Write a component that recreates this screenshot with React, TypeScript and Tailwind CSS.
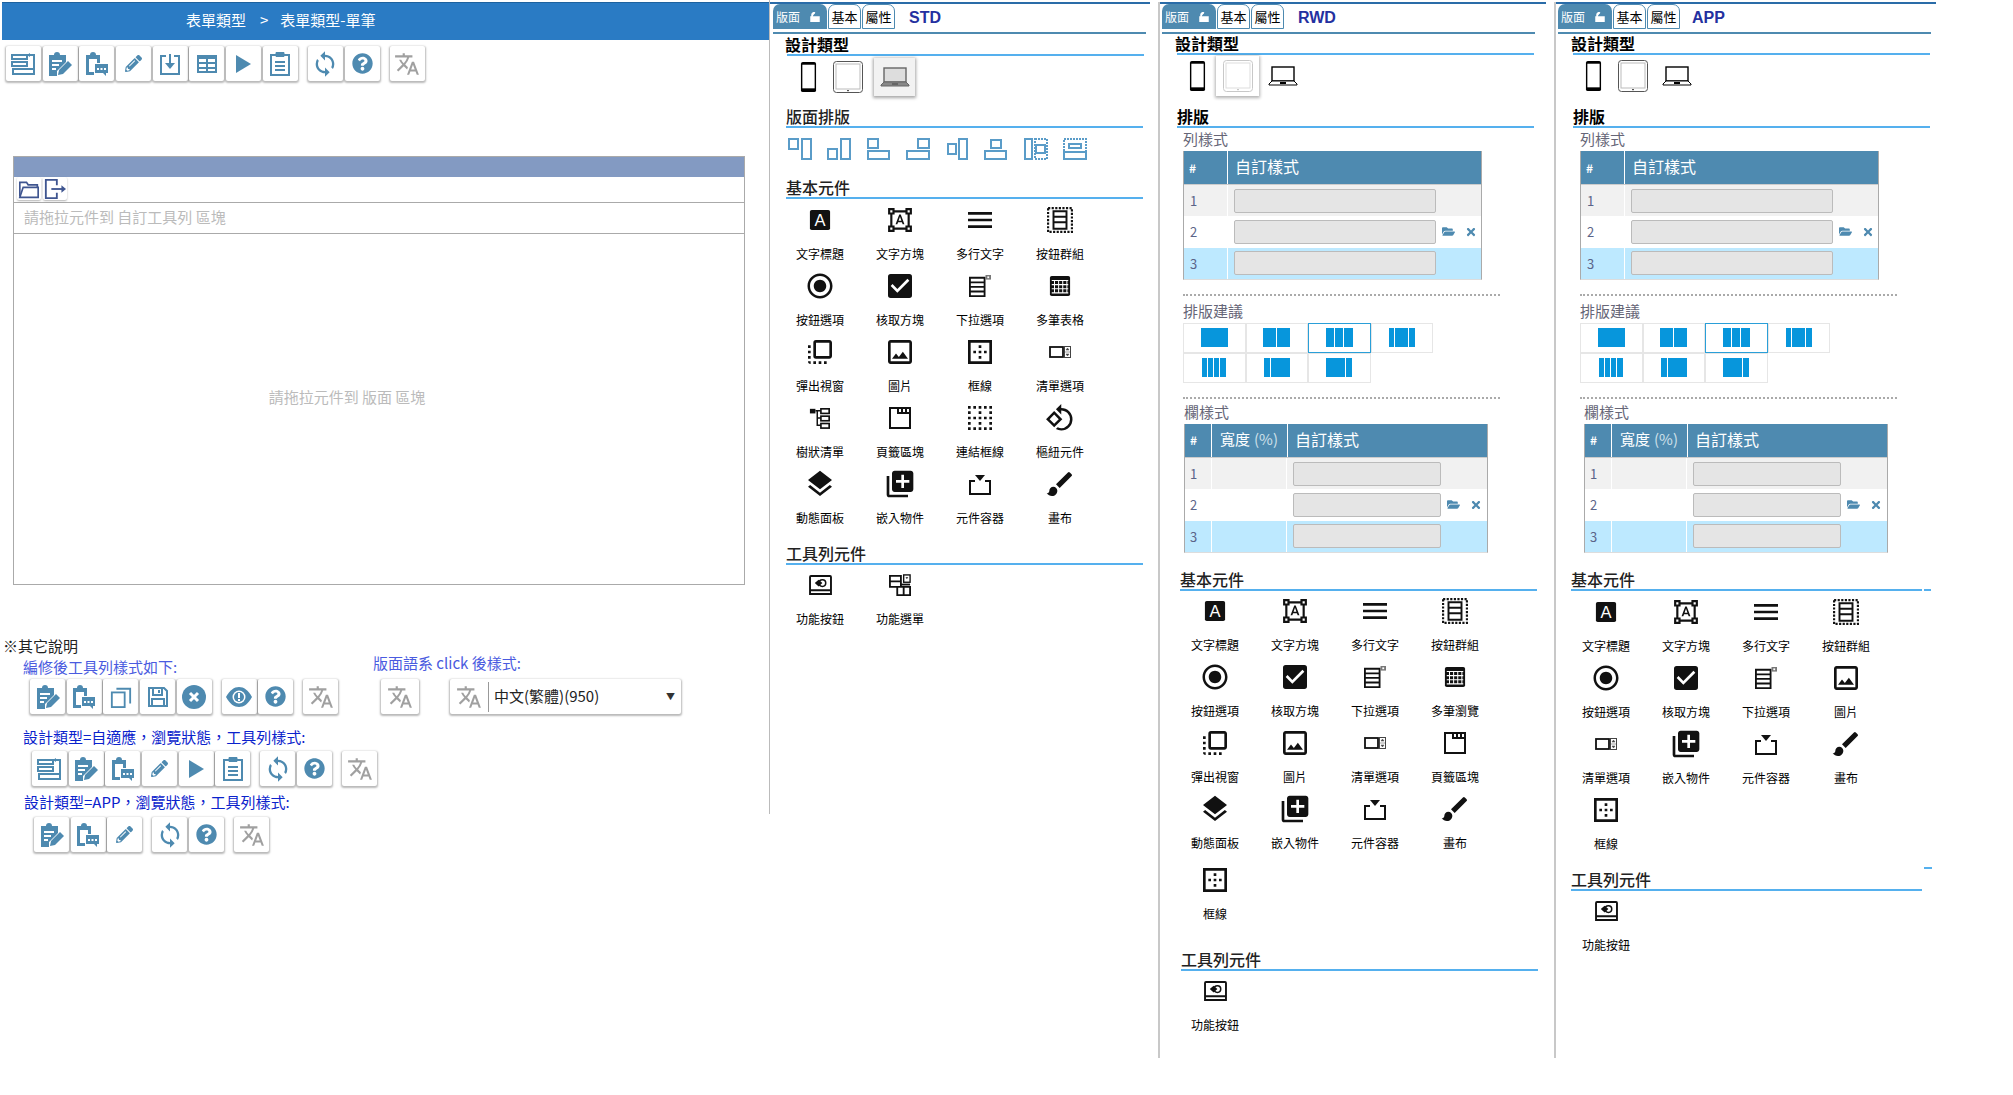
import React from 'react';
import { FaFolderOpen, FaPencilAlt, FaQuestionCircle, FaTimes } from 'react-icons/fa';
import {
  MdBorderClear, MdBorderOuter, MdBrush, MdCheckBox, MdFlipToFront, MdFormatShapes, MdLayers, MdLibraryAdd,
  MdMenu, MdOutlineImage, MdRadioButtonChecked, MdRotate90DegreesCcw, MdSync, MdTranslate,
} from 'react-icons/md';

const BLUE = '#4e8ab0';

const Svg = ({ w = 24, h = 24, box = '0 0 24 24', children, color = BLUE }: { w?: number; h?: number; box?: string; children: React.ReactNode; color?: string }) => (
  <svg width={w} height={h} viewBox={box} fill="none" stroke="none" style={{ color }}>{children}</svg>
);

// toolbar drawings
const Stack = () => (
  <Svg w={25} h={22} box="0 0 25 22">
    <g stroke="currentColor" strokeWidth="2">
      <rect x="1" y="2" width="15" height="4" />
      <rect x="1" y="9" width="15" height="4" />
      <rect x="2" y="16" width="21" height="5" />
      <path d="M16 2h7v19" />
    </g>
    <path d="M16 2l3-2v4z" fill="currentColor" />
  </Svg>
);
const ClipEdit = () => (
  <Svg>
    <path d="M1 3h5a3 3 0 016 0h6v7l-9 9v5H1zM4 8v2h10V8zm0 4v2h7v-2zm0 4v2h4v-2z" fill="currentColor" fillRule="evenodd" />
    <path d="M10 23l1-5 9-9 4 4-9 9z" fill="currentColor" />
  </Svg>
);
const ClipChat = () => (
  <Svg>
    <path d="M1 3h4a3 3 0 016 0h4v8h-3V7H4v13h5v3H1z" fill="currentColor" />
    <path d="M10 12h13v9h-2v3l-3-3h-8z" fill="currentColor" />
    <g fill="#fff"><rect x="12" y="16" width="2" height="2" /><rect x="15.500" y="16" width="2" height="2" /><rect x="19" y="16" width="2" height="2" /></g>
  </Svg>
);
const Download = () => (
  <Svg w={20} h={22} box="0 0 20 22">
    <path d="M6 3H1v18h18V3h-5" stroke="currentColor" strokeWidth="2" />
    <path d="M10 1v10" stroke="currentColor" strokeWidth="2" />
    <path d="M5 10h10l-5 6z" fill="currentColor" />
  </Svg>
);
const TableIcon = () => (
  <Svg w={20} h={18} box="0 0 20 18">
    <path d="M0 0h20v18H0zM2 4v3h7V4zm9 0v3h7V4zM2 9v3h7V9zm9 0v3h7V9zM2 14v2h7v-2zm9 0v2h7v-2z" fill="currentColor" fillRule="evenodd" />
  </Svg>
);
const Play = () => (
  <Svg w={15} h={18} box="0 0 15 18"><path d="M0 0l15 9L0 18z" fill="currentColor" /></Svg>
);
const Clip = () => (
  <Svg w={20} h={25} box="0 0 20 25">
    <path d="M1 4h18v20H1z" stroke="currentColor" strokeWidth="2" />
    <path d="M6 1.500h8v4H6z" fill="currentColor" stroke="currentColor" />
    <path d="M5 10h10v2H5zm0 4h10v2H5zm0 4h10v2H5z" fill="currentColor" />
  </Svg>
);
const Translate = () => <MdTranslate size={26} color="#a0a0a0" />;
const Copy = () => (
  <Svg w={22} h={26}>
    <rect x="2" y="7" width="14" height="16" stroke="currentColor" strokeWidth="2" />
    <path d="M7 3h15v16" stroke="currentColor" strokeWidth="2" />
  </Svg>
);
const Floppy = () => (
  <Svg w={24} h={24}>
    <path d="M3 3h15l3 3v15H3zM7 3v7h9V3M6 21v-7h12v7" stroke="currentColor" strokeWidth="2" />
    <rect x="12" y="5" width="2" height="3" fill="currentColor" />
  </Svg>
);
const CloseCircle = () => (
  <Svg w={24} h={24}>
    <circle cx="12" cy="12" r="12" fill="currentColor" />
    <path d="M8 8l8 8M16 8l-8 8" stroke="#fff" strokeWidth="3" />
  </Svg>
);
const EyeMark = () => (
  <Svg w={26} h={20} box="0 0 26 20">
    <path d="M0 10C4 3 8 0 13 0s9 3 13 10c-4 7-8 10-13 10S4 17 0 10z" fill="currentColor" />
    <circle cx="13" cy="10" r="6.500" fill="#fff" />
    <circle cx="13" cy="10" r="5" fill="currentColor" />
    <path d="M12 6h2v5h-2zm0 6h2v2h-2z" fill="#fff" />
  </Svg>
);
const Pencil = () => <FaPencilAlt size={17} color={BLUE} />;
const Sync = () => <MdSync size={28} color={BLUE} />;
const Help = () => <FaQuestionCircle size={21} color={BLUE} />;

const Btn = ({ children, w = 'w-[35px]' }: { children?: React.ReactNode; w?: string }) => (
  <div className={`${w} h-[35px] shrink-0 flex items-center justify-center bg-white rounded-[2px] shadow-[0_1px_2px_1px_rgba(0,0,0,0.28)]`}>{children}</div>
);

const ToolRow = ({ groups, className }: { groups: React.ReactNode[][]; className?: string }) => (
  <div className={`flex gap-[10px] ${className}`}>
    {groups.map((g, i) => (
      <div key={i} className="flex gap-[1.7px]">
        {g.map((icon, j) => <Btn key={j}>{icon}</Btn>)}
      </div>
    ))}
  </div>
);

// widget drawings
const K = '#111';
const TileA = () => (
  <Svg w={22} h={22} color={K}>
    <rect x="1" y="1" width="22" height="22" rx="2" fill="currentColor" />
    <text x="12" y="19" textAnchor="middle" fontSize="18" fill="#fff" fontFamily="'Liberation Sans', sans-serif">A</text>
  </Svg>
);
const Shapes = () => <MdFormatShapes size={26} color={K} />;
const BtnGroup = () => (
  <Svg w={26} h={26} color={K}>
    <rect x="1" y="1" width="22" height="22" stroke="currentColor" strokeWidth="2" strokeDasharray="2 1.300" />
    <path d="M6 4h12v5H6zm0 5h12v5H6zm0 5h12v6H6z" stroke="currentColor" strokeWidth="1.800" />
  </Svg>
);
const Dropdown = () => (
  <Svg w={22} h={22} color={K}>
    <path d="M1 3h16v20H1zM1 8h16M1 13h16M1 18h16" stroke="currentColor" strokeWidth="2" />
    <rect x="18" y="0" width="6" height="5" fill="#777" />
    <rect x="20" y="1.500" width="2" height="2" fill="#fff" />
  </Svg>
);
const GridTable = () => (
  <Svg w={24} h={22} color={K}>
    <rect x="1" y="1" width="22" height="22" rx="2" fill="currentColor" />
    <path d="M6 6v14M10.500 6v14M15 6v14M19.500 6v14M3 6h18M3 10.500h18M3 15h18M3 19.500h18" stroke="#fff" strokeWidth="1.100" />
  </Svg>
);
const ListSel = () => (
  <Svg w={22} h={12} box="0 0 22 12" color={K}>
    <rect x="1" y="1" width="13" height="10" stroke="currentColor" strokeWidth="1.800" />
    <rect x="15.500" y="0.500" width="6" height="11" stroke="#444" />
    <path d="M16 6h5M17 4l1.500-2 1.500 2zM17 8l1.500 2 1.500-2z" fill="#444" stroke="#444" strokeWidth="0.500" />
  </Svg>
);
const Tree = () => (
  <Svg w={22} h={24} color={K}>
    <rect x="1" y="2" width="6" height="5" fill="currentColor" />
    <path d="M7 4h6M9 4v16h4M9 12h4" stroke="currentColor" strokeWidth="1.600" />
    <rect x="13" y="2" width="9" height="5" stroke="currentColor" strokeWidth="1.800" fill="#fff" />
    <rect x="13" y="10" width="9" height="5" stroke="currentColor" strokeWidth="1.800" fill="#fff" />
    <rect x="13" y="18" width="9" height="5" stroke="currentColor" strokeWidth="1.800" fill="#fff" />
  </Svg>
);
const TabBox = () => (
  <Svg w={24} h={24} color={K}>
    <path d="M2 2h20v20H2zM10 2v5h12M14 3v3M18 3v3" stroke="currentColor" strokeWidth="2" />
  </Svg>
);
const Container = () => (
  <Svg w={26} h={24} color={K}>
    <path d="M7 9H2v13h20V9h-5" stroke="currentColor" strokeWidth="2" />
    <path d="M7 3h10l-5 6z" fill="currentColor" />
  </Svg>
);
const FuncBtn = () => (
  <Svg w={23} h={20} box="0 0 24 21" color={K}>
    <path d="M2 1h20a1 1 0 011 1v18H1V2a1 1 0 011-1zM1 16h22" stroke="currentColor" strokeWidth="2" />
    <path d="M6 8.500l4-3.500 4 3.500-4 3.500z" fill="currentColor" />
    <circle cx="14" cy="8.500" r="3.500" stroke="currentColor" strokeWidth="1.600" />
  </Svg>
);
const FuncMenu = () => (
  <Svg w={22} h={22} color={K}>
    <path d="M1 2h12v12H1zM1 8h12M9 14h14v9H9zM16 14v9" stroke="currentColor" strokeWidth="2" />
    <rect x="16" y="1" width="7" height="8" stroke="currentColor" strokeWidth="1.500" />
    <path d="M18 3.500h3l-1.500 2z" fill="currentColor" />
    <path d="M13 11.500h10" stroke="currentColor" strokeWidth="2" />
  </Svg>
);

const W: Record<string, React.ReactNode> = {
  title: <TileA />,
  input: <Shapes />,
  multi: <MdMenu size={32} color={K} />,
  group: <BtnGroup />,
  radio: <MdRadioButtonChecked size={30} color={K} />,
  check: <MdCheckBox size={32} color={K} />,
  drop: <Dropdown />,
  grid: <GridTable />,
  popup: <MdFlipToFront size={32} color={K} />,
  image: <MdOutlineImage size={32} color={K} />,
  border: <MdBorderOuter size={32} color={K} />,
  list: <ListSel />,
  tree: <Tree />,
  tab: <TabBox />,
  link: <MdBorderClear size={32} color={K} />,
  pivot: <MdRotate90DegreesCcw size={30} color={K} />,
  layer: <MdLayers size={32} color={K} />,
  embed: <MdLibraryAdd size={32} color={K} />,
  box: <Container />,
  brush: <MdBrush size={32} color={K} />,
  func: <FuncBtn />,
  menu: <FuncMenu />,
};

const WidgetGrid = ({ items, className }: { items: [string, string][]; className?: string }) => (
  <div className={`grid grid-cols-[repeat(4,80px)] auto-rows-[66px] ${className}`}>
    {items.map(([key, label]) => (
      <div key={label} className="flex flex-col items-center">
        <div className="h-[32px] flex items-center justify-center">{W[key]}</div>
        <div className="mt-[8px] h-[20px] text-[12px] leading-[20px] text-black whitespace-nowrap">{label}</div>
      </div>
    ))}
  </div>
);

const Section = ({ title, className, w = 'w-[357px]', tx = 'ml-0', strong, dash }: { title: string; className?: string; w?: string; tx?: string; strong?: boolean; dash?: boolean }) => (
  <div className={className}>
    <div className={`h-[19px] text-[16px] leading-[18px] whitespace-nowrap ${strong ? 'font-bold text-black' : 'font-medium text-[#222]'} ${tx}`}>{title}</div>
    <div className="flex gap-[2px]">
      <div className={`h-[2px] bg-[#55b0ee] ${w}`} />
      {dash && <div className="h-[2px] w-[7px] bg-[#55b0ee]" />}
    </div>
  </div>
);

const Tabs = ({ name, ml = 'ml-[3px]', nameMl = 'ml-[14px]' }: { name: string; ml?: string; nameMl?: string }) => (
  <div>
    <div className="h-[2px] bg-[#2a6ca8]" />
    <div className={`flex items-center h-[25px] ${ml}`}>
      <div className="w-[54px] h-[25px] flex items-center pl-[3px] gap-[10px] bg-[#4e8ab0] rounded-t-[7px] text-[12px] text-white">
        <span>版面</span>
        <svg width="10" height="10" viewBox="0 0 10 10"><path d="M1 5h8v5H1zM2 5V3a2 2 0 013-2" stroke="#fff" strokeWidth="1.500" fill="#fff" /></svg>
      </div>
      <div className="ml-px w-[33px] h-[25px] flex items-center justify-center border border-[#4e8ab0] rounded-t-[7px] text-[13px] text-black">基本</div>
      <div className="ml-px w-[33px] h-[25px] flex items-center justify-center border border-[#4e8ab0] rounded-t-[7px] text-[13px] text-black">屬性</div>
      <div className={`${nameMl} pt-[3px] text-[16px] font-bold text-[#2430a0] [font-family:'Liberation_Sans',sans-serif]`}>{name}</div>
    </div>
    <div className={`h-[2px] mt-[3px] w-[373px] bg-[#4e8ab0] ${ml}`} />
  </div>
);

const Phone = () => (
  <Svg w={18} h={34} box="0 0 18 34" color="#000">
    <rect x="1" y="1" width="16" height="32" rx="2" fill="currentColor" />
    <rect x="2.500" y="4" width="13" height="25" fill="#fff" />
  </Svg>
);
const Tablet = ({ faded }: { faded?: boolean }) => (
  <Svg w={30} h={32} box="0 0 30 32" color={faded ? '#c8c8c8' : '#555'}>
    <rect x="0.500" y="0.500" width="29" height="31" rx="3" stroke="currentColor" />
    <rect x="3" y="3" width="24" height="25" stroke={faded ? '#ddd' : '#bbb'} />
    <rect x="14" y="29" width="2" height="1.200" fill="currentColor" />
  </Svg>
);
const Laptop = ({ faded }: { faded?: boolean }) => (
  <Svg w={30} h={20} box="0 0 30 20" color={faded ? '#666' : '#000'}>
    <rect x="4" y="1" width="22" height="14" stroke="currentColor" strokeWidth="1.400" fill={faded ? '#ddd' : '#fff'} />
    <path d="M4 15L1 18v1h28v-1l-3-3z" fill={faded ? '#888' : '#fff'} stroke="currentColor" />
    <rect x="12" y="16" width="6" height="2" fill="currentColor" />
  </Svg>
);

const DesignTypes = ({ active, className }: { active: 'tablet' | 'laptop' | 'none'; className?: string }) => (
  <div className={`flex items-center h-[40px] ${className}`}>
    <div className="w-[17px] flex justify-center"><Phone /></div>
    {active === 'tablet' ? (
      <div className="ml-[10px] w-[43px] h-[40px] flex items-center justify-center bg-white shadow-[0_1px_3px_1px_rgba(0,0,0,0.3)]"><Tablet faded /></div>
    ) : (
      <div className="ml-[16px] w-[30px] flex justify-center"><Tablet /></div>
    )}
    {active === 'laptop' ? (
      <div className="ml-[11px] w-[41px] h-[38px] flex items-center justify-center bg-[#f2f2f2] shadow-[0_1px_3px_1px_rgba(0,0,0,0.35)]"><Laptop faded /></div>
    ) : (
      <div className={`${active === 'tablet' ? 'ml-[9px]' : 'ml-[14px]'} w-[30px] flex justify-center`}><Laptop /></div>
    )}
  </div>
);

const Align = ({ rects }: { rects: number[][] }) => (
  <Svg w={24} h={22} box="0 0 24 22" color="#5a9cc8">
    {rects.map((r, i) => (
      <rect key={i} x={r[0]} y={r[1]} width={r[2]} height={r[3]} stroke="currentColor" strokeWidth="2" strokeDasharray={r[4] ? '2 1' : undefined} />
    ))}
  </Svg>
);
const ALIGNS: number[][][] = [
  [[1, 1, 22, 0], [1, 1, 9, 10], [14, 1, 9, 20]],
  [[1, 21, 22, 0], [1, 11, 9, 10], [14, 1, 9, 20]],
  [[1, 1, 0, 20], [1, 1, 10, 9], [1, 13, 21, 8]],
  [[23, 1, 0, 20], [12, 1, 11, 9], [1, 13, 22, 8]],
  [[0, 11, 24, 0], [3, 6, 8, 10], [14, 1, 8, 20]],
  [[12, 0, 0, 22], [7, 2, 10, 8], [1, 13, 21, 8]],
  [[1, 1, 7, 20], [11, 1, 12, 20, 1], [12, 7, 9, 8]],
  [[1, 1, 22, 20, 1], [6, 6, 12, 4], [1, 14, 22, 7]],
];

const Field = ({ w }: { w: string }) => <div className={`h-[24px] ${w} ml-[6px] shrink-0 bg-[#e5e5e5] border border-[#bbb] rounded-[2px]`} />;

const TABLE_ROWS = ['bg-[#f1f1f1]', 'bg-white', 'bg-[#bde9ff]'];

const Icons = () => (
  <div className="flex items-center ml-[6px] gap-[10px] text-[#4e8ab0]">
    <FaFolderOpen size={13} />
    <FaTimes size={12} />
  </div>
);

const RowTable = ({ className }: { className?: string }) => (
  <div className={`w-[299px] border-x border-[#aaa] border-b border-b-[#ddd] ${className}`}>
    <div className="flex h-[34px] bg-[#4e8ab0] text-white border-b border-[#ccc]">
      <div className="w-[44px] border-r border-white flex items-center pl-[5px] text-[12px] font-bold">#</div>
      <div className="flex-1 flex items-center pl-[7px] pb-[3px] text-[16px]">自訂樣式</div>
    </div>
    {TABLE_ROWS.map((bg, i) => (
      <div key={i} className={`flex items-center h-[31.330px] ${bg}`}>
        <div className="w-[44px] h-full border-r border-white flex items-center pl-[6px] text-[13px] text-[#5a6488]">{i + 1}</div>
        <Field w="w-[202px]" />
        {i === 1 && <Icons />}
      </div>
    ))}
  </div>
);

const ColTable = ({ className }: { className?: string }) => (
  <div className={`w-[304px] border-x border-[#aaa] border-b border-b-[#ddd] ${className}`}>
    <div className="flex h-[34px] bg-[#4e8ab0] text-white border-b border-[#ccc]">
      <div className="w-[27px] border-r border-white flex items-center pl-[5px] text-[12px] font-bold">#</div>
      <div className="w-[76px] border-r border-white flex items-center pl-[8px] pb-[2px] text-[15px] whitespace-nowrap">寬度 <span className="ml-1 text-[#cfe0ea]">(%)</span></div>
      <div className="flex-1 flex items-center pl-[7px] pb-[2px] text-[16px]">自訂樣式</div>
    </div>
    {TABLE_ROWS.map((bg, i) => (
      <div key={i} className={`flex items-center h-[31.330px] ${bg}`}>
        <div className="w-[27px] h-full border-r border-white flex items-center pl-[5px] text-[13px] text-[#5a6488]">{i + 1}</div>
        <div className="w-[75px] h-full border-r border-white" />
        <Field w="w-[148px]" />
        {i === 1 && <Icons />}
      </div>
    ))}
  </div>
);

const SUGGEST: [number[], boolean][] = [
  [[27], false], [[13, 13], false], [[8, 8, 9], true], [[5, 13, 6], false],
  [[5, 5, 5, 6], false], [[6, 19], false], [[19, 6], false],
];
const Suggest = ({ className }: { className?: string }) => (
  <div className={`grid grid-cols-[repeat(4,62.500px)] auto-rows-[30px] ${className}`}>
    {SUGGEST.map(([bars, on], i) => (
      <div key={i} className={`flex items-center justify-center gap-px border ${on ? 'border-[#2a9fd8]' : 'border-[#e6e6e6]'}`}>
        {bars.map((b, j) => <div key={j} className="h-[19px] bg-[#0796dc]" style={{ width: b }} />)}
      </div>
    ))}
  </div>
);

const Dots = ({ className }: { className?: string }) => <div className={`h-0 w-[317px] border-t-2 border-dotted border-[#aaa] ${className}`} />;
const Sub = ({ text, className }: { text: string; className?: string }) => (
  <div className={`h-[20px] text-[15px] leading-[18px] text-[#667] whitespace-nowrap ${className}`}>{text}</div>
);

const STD_ITEMS: [string, string][] = [
  ['title', '文字標題'], ['input', '文字方塊'], ['multi', '多行文字'], ['group', '按鈕群組'],
  ['radio', '按鈕選項'], ['check', '核取方塊'], ['drop', '下拉選項'], ['grid', '多筆表格'],
  ['popup', '彈出視窗'], ['image', '圖片'], ['border', '框線'], ['list', '清單選項'],
  ['tree', '樹狀清單'], ['tab', '頁籤區塊'], ['link', '連結框線'], ['pivot', '樞紐元件'],
  ['layer', '動態面板'], ['embed', '嵌入物件'], ['box', '元件容器'], ['brush', '畫布'],
];
const RWD_ITEMS: [string, string][] = [
  ['title', '文字標題'], ['input', '文字方塊'], ['multi', '多行文字'], ['group', '按鈕群組'],
  ['radio', '按鈕選項'], ['check', '核取方塊'], ['drop', '下拉選項'], ['grid', '多筆瀏覽'],
  ['popup', '彈出視窗'], ['image', '圖片'], ['list', '清單選項'], ['tab', '頁籤區塊'],
  ['layer', '動態面板'], ['embed', '嵌入物件'], ['box', '元件容器'], ['brush', '畫布'],
];
const APP_ITEMS: [string, string][] = [
  ['title', '文字標題'], ['input', '文字方塊'], ['multi', '多行文字'], ['group', '按鈕群組'],
  ['radio', '按鈕選項'], ['check', '核取方塊'], ['drop', '下拉選項'], ['image', '圖片'],
  ['list', '清單選項'], ['embed', '嵌入物件'], ['box', '元件容器'], ['brush', '畫布'],
  ['border', '框線'],
];

const LayoutBlock = ({ rowMl, colMl }: { rowMl: string; colMl: string }) => (
  <>
    <Section title="排版" strong className="ml-[17px] mt-[11px]" />
    <Sub text="列樣式" className={`mt-[2px] ${rowMl}`} />
    <RowTable className={`mt-[1px] ${rowMl}`} />
    <Dots className={`mt-[14px] ${rowMl}`} />
    <Sub text="排版建議" className={`mt-[6px] ${rowMl}`} />
    <Suggest className={`mt-[1px] ${rowMl}`} />
    <Dots className={`mt-[14px] ${rowMl}`} />
    <Sub text="欄樣式" className={`mt-[4px] ${colMl}`} />
    <ColTable className={`mt-[1px] ${colMl}`} />
  </>
);

export default function App() {
  return (
    <div className="flex items-start w-[2013px] h-[1095px] overflow-hidden bg-white [font-family:'Noto_Sans_CJK_TC','Liberation_Sans',sans-serif]">
      {/* left column */}
      <div className="w-[770px] h-[814px] shrink-0 border-r border-[#bbb]">
        <div className="ml-[2px] mt-[2px] h-[38px] bg-[#2a7bc4] border-t border-[#1d629f] flex items-center pl-[184px] pb-[2px] text-[15px] text-white">
          <span>表單類型</span>
          <span className="ml-[14px]">&gt;</span>
          <span className="ml-[12px]">表單類型-單筆</span>
        </div>
        <ToolRow
          className="ml-[6px] mt-[6px]"
          groups={[
            [<Stack />, <ClipEdit />, <ClipChat />, <Pencil />, <Download />, <TableIcon />, <Play />, <Clip />],
            [<Sync />, <Help />],
            [<Translate />],
          ]}
        />
        <div className="ml-[13px] mt-[75px] w-[732px] h-[429px] border border-[#aaa] flex flex-col">
          <div className="h-[20px] bg-[#839ac2]" />
          <div className="h-[26px] flex items-start gap-[2px] pl-[3px] border-b border-[#aaa]">
            <div className="w-[24px] h-[23px] flex items-center justify-center bg-white rounded-[2px] shadow-[0_1px_2px_rgba(0,0,0,0.3)]">
              <Svg w={22} h={20} color="#3f5590">
                <path d="M1 21V4h8l2 3h11v3" stroke="currentColor" strokeWidth="2" />
                <path d="M1 22l4-12h18v12z" stroke="currentColor" strokeWidth="2" />
              </Svg>
            </div>
            <div className="w-[24px] h-[23px] flex items-center justify-center bg-white rounded-[2px] shadow-[0_1px_2px_rgba(0,0,0,0.3)]">
              <Svg w={22} h={22} color="#3f5590">
                <path d="M14 8V2H2v20h12v-6" stroke="currentColor" strokeWidth="2" />
                <path d="M8 12h12" stroke="currentColor" strokeWidth="2" />
                <path d="M19 8l5 4-5 4z" fill="currentColor" />
              </Svg>
            </div>
          </div>
          <div className="h-[31px] flex items-center pl-[10px] pb-[2px] text-[15px] text-[#bbb] border-b border-[#aaa]">請拖拉元件到 自訂工具列 區塊</div>
          <div className="flex-1 flex items-center justify-center pr-[64px] pb-[24px] text-[15px] text-[#bbb]">請拖拉元件到 版面 區塊</div>
        </div>
        <div className="ml-[3px] mt-[51px] h-[20px] text-[15px] leading-[20px] text-[#222]">※其它說明</div>
        <div className="flex items-start">
          <div className="w-[373px] pl-[23px]">
            <div className="mt-[2px] h-[20px] text-[15px] leading-[18px] text-[#4a5be0]">編修後工具列樣式如下:</div>
            <ToolRow
              className="ml-[7px] mt-px"
              groups={[
                [<ClipEdit />, <ClipChat />, <Copy />, <Floppy />, <CloseCircle />],
                [<EyeMark />, <Help />],
                [<Translate />],
              ]}
            />
          </div>
          <div>
            <div className="h-[16px] text-[15px] leading-[14px] text-[#4a5be0] whitespace-nowrap">版面語系 click 後樣式:</div>
            <div className="flex mt-[7px] ml-[8px]">
              <Btn w="w-[38px]"><Translate /></Btn>
              <div className="ml-[31px] w-[231px] h-[35px] flex items-center bg-white rounded-[2px] shadow-[0_1px_2px_1px_rgba(0,0,0,0.28)]">
                <div className="w-[39px] h-[30px] flex items-center justify-center border-r border-[#999]"><Translate /></div>
                <span className="ml-[5px] text-[15px] text-[#222] whitespace-nowrap">中文(繁體)(950)</span>
                <span className="ml-auto mr-[6px] text-[9px] text-[#333]">▼</span>
              </div>
            </div>
          </div>
        </div>
        <div className="ml-[23px] mt-[14px] h-[20px] text-[15px] leading-[18px] text-[#0a22cc] whitespace-nowrap">{'設計類型=自適應\uFF0C瀏覽狀態\uFF0C工具列樣式:'}</div>
        <ToolRow
          className="ml-[32px] mt-[3px]"
          groups={[
            [<Stack />, <ClipEdit />, <ClipChat />, <Pencil />, <Play />, <Clip />],
            [<Sync />, <Help />],
            [<Translate />],
          ]}
        />
        <div className="ml-[24px] mt-[7px] h-[20px] text-[15px] leading-[18px] text-[#0a22cc] whitespace-nowrap">{'設計類型=APP\uFF0C瀏覽狀態\uFF0C工具列樣式:'}</div>
        <ToolRow
          className="ml-[34px] mt-[4px]"
          groups={[
            [<ClipEdit />, <ClipChat />, <Pencil />],
            [<Sync />, <Help />],
            [<Translate />],
          ]}
        />
      </div>

      {/* STD */}
      <div className="w-[380px] shrink-0">
        <div className="mt-[2px]"><Tabs name="STD" /></div>
        <Section title="設計類型" strong className="ml-[17px] mt-px" tx="-ml-[2px]" />
        <DesignTypes active="laptop" className="ml-[30px] mt-px" />
        <Section title="版面排版" className="ml-[16px] mt-[10px]" />
        <div className="flex ml-[18px] mt-[10px] gap-[15.300px] h-[22px]">
          {ALIGNS.map((a, i) => <Align key={i} rects={a} />)}
        </div>
        <Section title="基本元件" className="ml-[16px] mt-[18px]" />
        <WidgetGrid items={STD_ITEMS} className="ml-[10px] mt-[5px]" />
        <Section title="工具列元件" className="ml-[16px] mt-[10px]" />
        <WidgetGrid items={[['func', '功能按鈕'], ['menu', '功能選單']]} className="ml-[10px] mt-[4px]" />
      </div>

      {/* RWD */}
      <div className="w-[396px] shrink-0 pl-[8px]">
        <div className="mt-[2px] h-[1056px] border-l-2 border-[#c8c8c8]">
          <Tabs name="RWD" ml="ml-[2px]" />
          <Section title="設計類型" strong className="ml-[17px]" tx="-ml-[2px]" />
          <DesignTypes active="tablet" className="ml-[29px] mt-px" />
          <LayoutBlock rowMl="ml-[23px]" colMl="ml-[24px]" />
          <Section title="基本元件" className="ml-[20px] mt-[17px]" />
          <WidgetGrid items={RWD_ITEMS} className="ml-[15px] mt-[4px]" />
          <WidgetGrid items={[['border', '框線']]} className="ml-[15px] mt-[5px]" />
          <Section title="工具列元件" className="ml-[21px] mt-[20px]" />
          <WidgetGrid items={[['func', '功能按鈕']]} className="ml-[15px] mt-[4px]" />
        </div>
      </div>

      {/* APP */}
      <div className="w-[390px] shrink-0 pl-[8px]">
        <div className="mt-[2px] h-[1056px] border-l-2 border-[#c8c8c8]">
          <Tabs name="APP" ml="ml-[2px]" nameMl="ml-[12px]" />
          <Section title="設計類型" strong className="ml-[17px]" tx="-ml-[2px]" />
          <DesignTypes active="none" className="ml-[29px] mt-px" />
          <LayoutBlock rowMl="ml-[24px]" colMl="ml-[28px]" />
          <Section title="基本元件" className="ml-[15px] mt-[17px]" w="w-[351px]" dash />
          <WidgetGrid items={APP_ITEMS} className="ml-[10px] mt-[5px]" />
          <div className="ml-[368px] mt-[7px] w-[8px] h-[2px] bg-[#55b0ee]" />
          <Section title="工具列元件" className="ml-[15px] mt-px" w="w-[351px]" />
          <WidgetGrid items={[['func', '功能按鈕']]} className="ml-[10px] mt-[4px]" />
        </div>
      </div>
    </div>
  );
}
